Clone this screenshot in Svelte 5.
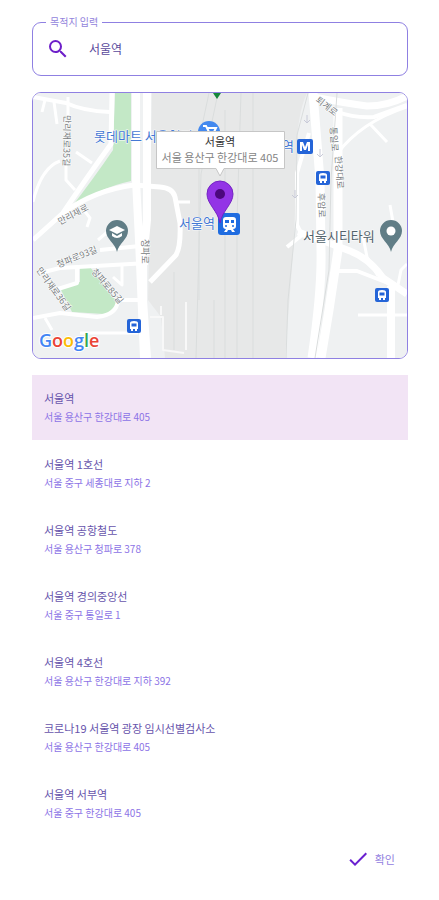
<script>
  let query = $state('서울역');
  let selected = $state(0);
  const places = [
    { name: '서울역', address: '서울 용산구 한강대로 405' },
    { name: '서울역 1호선', address: '서울 중구 세종대로 지하 2' },
    { name: '서울역 공항철도', address: '서울 용산구 청파로 378' },
    { name: '서울역 경의중앙선', address: '서울 중구 통일로 1' },
    { name: '서울역 4호선', address: '서울 용산구 한강대로 지하 392' },
    { name: '코로나19 서울역 광장 임시선별검사소', address: '서울 용산구 한강대로 405' },
    { name: '서울역 서부역', address: '서울 중구 한강대로 405' }
  ];
</script>

{#snippet bus(x, y)}
  <g transform="translate({x} {y})">
    <rect x="-7" y="-7" width="14" height="14" rx="2" fill="#2565d8" />
    <path d="M-4-3Q-4-5 0-5T4-3V3H3V5H1V3H-1V5H-3V3H-4Z" fill="#fff" />
    <path d="M-2.500-2.500H2.500V.5H-2.500Z" fill="#2565d8" />
  </g>
{/snippet}

<main>
  <fieldset class="search">
    <legend><label for="destination">목적지 입력</label></legend>
    <svg class="icon" viewBox="0 0 24 24" aria-hidden="true">
      <path fill="#6d1fc9" d="M15.500 14h-.79l-.28-.27A6.470 6.470 0 0 0 16 9.500 6.500 6.500 0 1 0 9.500 16c1.610 0 3.090-.59 4.230-1.570l.27.28v.79l5 4.990L20.490 19l-4.990-5zm-6 0C7.010 14 5 11.990 5 9.500S7.010 5 9.500 5 14 7.010 14 9.500 11.990 14 9.500 14z" />
    </svg>
    <input id="destination" type="text" bind:value={query} />
  </fieldset>

  <section class="map" aria-label="지도">
    <svg viewBox="33 93 374 265">
      <rect x="33" y="93" width="374" height="265" fill="#eff1f2" />
      <path d="M152 93H307Q297 115 297 150L294 240L285 358H165L161 317L148 300Z" fill="#e7e8e8" />
      <path d="M115 93H131V181Q98 188 70 209Q94 178 113 150Z" fill="#c3e8c6" />
      <path d="M80 267H90L118 303Q113 313 104 314L72 312L60 288L80 282Z" fill="#c3e8c6" />

      <g fill="none" stroke="#fff" stroke-linejoin="round">
        <path stroke-width="5" d="M112 93L111 144Q85 180 63 213L33 240M63 213Q95 190 134 185L160 187Q173 188 175 197L180 223Q181 246 176 255L150 282" />
        <path stroke-width="4" d="M33 318L60 313L97 317Q117 315 118 300H140M40 273L60 268L148 263M100 250L140 246M77 268V283L58 289M33 97L66 103Q83 111 110 112" />
        <path stroke-width="3" d="M68 97V117M54 102L57 124M45 100L42 112M33 202Q41 168 60 161M66 157V180L75 190M76 152L92 163M45 318L52 330M83 209L90 218L87 227M122 263V285L113 277M98 240L112 228M80 333H138M178 202H190" />
        <path stroke-width="2" d="M150 317H163V350L184 353M186 302V350M161 315V306" stroke="#f8f8f8" />
        <path stroke-width="8" d="M136 93V180L139 240L144 358M147 93V220L143 260V300L147 358" />
        <path stroke-width="9" d="M313 93L320 180L321 250Q322 290 312 358M338 108V250L329 310L321 358" />
        <path stroke-width="7" d="M314 97Q344 103 367 106Q388 106 407 96M298 232Q327 242 350 251Q369 258 383 278L407 294" />
        <path stroke-width="4" d="M338 112Q353 118 374 117L407 105M338 271L357 271L388 283M287 247L302 235L297 225V173L309 133" />
        <path stroke-width="8" d="M391 286V358" />
        <path stroke-width="3" d="M337 154Q361 122 407 107M370 124L387 142M358 315H407M363 237L367 257L378 276M398 285L401 270L407 264M390 205L393 222" />
      </g>

      <path d="M218 93L201 174L196 358M241 93L237 220V358M253 93V358M209 93L199 140V300M225 110V358M214 300V358M174 272V350M308 93L297 135L296 220L288 300L286 358M337 93L331 180L329 270L315 358" fill="none" stroke="#dadddd" />
      <path d="M307 115V123M304 120L307 123L310 120M320 149V157M317 154L320 157L323 154M295 190V198M292 195L295 198L298 195" fill="none" stroke="#c8cad8" />
      <path d="M213 93H221L217 99Z" fill="#16873b" />

      <g class="road">
        <text transform="translate(64 115) rotate(91)">만리재로35길</text>
        <text transform="translate(60 225) rotate(-28)">만리재로</text>
        <text transform="translate(58 268) rotate(-22)">청파로93길</text>
        <text transform="translate(36 270) rotate(54)">만리재로36길</text>
        <text transform="translate(91 272) rotate(49)">청파로85길</text>
        <text transform="translate(142 239) rotate(90)">청파로</text>
        <text transform="translate(315 101) rotate(38)">퇴계로</text>
        <text transform="translate(330 127) rotate(86)">통일로</text>
        <text transform="translate(335 156) rotate(86)">한강대로</text>
        <text transform="translate(318 193) rotate(88)">후암로</text>
      </g>

      <text class="place blue" x="94" y="141">롯데마트 서울역점</text>
      <text class="place blue" x="282" y="151">역</text>
      <text class="place blue" x="179" y="228">서울역</text>
      <text class="place dark" x="303" y="241">서울시티타워</text>

      <circle cx="209" cy="132" r="11" fill="#4389ef" />
      <path d="M203 126H206L209 132H216M207 128H216L214 132" fill="none" stroke="#fff" stroke-width="2" />

      <rect x="297" y="139" width="16" height="15" rx="2" fill="#2565d8" />
      <path d="M300 151V142H303L305 147L307 142H310V151H308V145L306 150H304L302 145V151Z" fill="#fff" />
      {@render bus(323, 178)}
      {@render bus(134, 326)}
      {@render bus(382, 295)}
      <rect x="218" y="213" width="22" height="22" rx="3" fill="#1f6ce0" />
      <path d="M223 220Q223 217 226 217H233Q236 217 236 220V226Q236 229 233 229L235 232H232L231 230H228L227 232H224L226 229Q223 229 223 226Z" fill="#fff" />
      <path d="M225 220H229V223H225ZM231 220H234V223H231Z" fill="#1f6ce0" />
      <circle cx="226" cy="226" r="1" fill="#1f6ce0" />
      <circle cx="233" cy="226" r="1" fill="#1f6ce0" />

      <path d="M117 252C115 243 106 239 106 231A11 11 0 0 1 128 231C128 239 119 243 117 252Z" fill="#607d86" />
      <path d="M109 230L117 226L125 230L117 234ZM112 233V236Q117 240 122 236V233L117 236Z" fill="#fff" />
      <path d="M391 252C389 243 380 239 380 231A11 11 0 0 1 402 231C402 239 393 243 391 252Z" fill="#607d86" />
      <circle cx="391" cy="231" r="4.500" fill="#fff" />

      <path d="M220 223C218 211 207 204 207 194A13 13 0 0 1 233 194C233 204 222 211 220 223Z" fill="#9334e6" stroke="#7423c4" />
      <circle cx="220" cy="194" r="5" fill="#4b087d" />

      <path d="M156.500 131.500H284.500V168.500H224L220 176L216 168.500H156.500Z" fill="#fff" stroke="#c6c6c6" />
      <text class="tip" x="220" y="146">서울역</text>
      <text class="tip address" x="220" y="162">서울 용산구 한강대로 405</text>

      <text class="google" x="39" y="347"><tspan fill="#4285f4">G</tspan><tspan fill="#ea4335">o</tspan><tspan fill="#fbbc05">o</tspan><tspan fill="#4285f4">g</tspan><tspan fill="#34a853">l</tspan><tspan fill="#ea4335">e</tspan></text>
    </svg>
  </section>

  <ul>
    {#each places as place, i}
      <li>
        <button class="result" class:selected={selected === i} onclick={() => (selected = i)}>
          <span class="name">{place.name}</span>
          <span class="address">{place.address}</span>
        </button>
      </li>
    {/each}
  </ul>

  <footer>
    <button class="confirm">
      <svg class="icon" viewBox="0 0 24 24" aria-hidden="true">
        <path fill="#6a20d0" d="M9 16.170L4.830 12l-1.420 1.410L9 19 21 7l-1.410-1.410z" />
      </svg>
      확인
    </button>
  </footer>
</main>

<style>
  :global(body) {
    margin: 0;
    background: #fff;
  }
  main {
    padding: 16px 31px 24px 32px;
    font-family: 'Noto Sans CJK KR', 'Noto Sans', sans-serif;
  }
  button,
  input {
    font: inherit;
    border: 0;
    background: none;
  }
  .search {
    display: flex;
    align-items: center;
    min-width: 0;
    height: 60px;
    margin: 0 0 16px;
    padding: 0 13px 6px;
    box-sizing: border-box;
    border: 1px solid #8f80e2;
    border-radius: 9px;
  }
  legend {
    padding: 0 4px;
    font-size: 10px;
    line-height: 12px;
    color: #9384dc;
  }
  .icon {
    flex: none;
    width: 24px;
    height: 24px;
  }
  input {
    flex: 1;
    min-width: 0;
    margin-left: 19px;
    padding: 0;
    font-size: 12px;
    line-height: 20px;
    color: #5b4a9c;
    outline: none;
  }
  .map {
    overflow: hidden;
    border: 1px solid #8f80e2;
    border-radius: 9px;
  }
  .map svg {
    display: block;
    width: 100%;
  }
  .road {
    font-size: 9px;
    fill: #777c80;
    stroke: #fff;
    stroke-width: 1px;
    paint-order: stroke;
  }
  .place {
    font-size: 13px;
    stroke: #fff;
    stroke-width: 1px;
    paint-order: stroke;
  }
  .blue {
    fill: #4478d4;
  }
  .dark {
    fill: #53636c;
  }
  .tip {
    font-size: 11px;
    text-anchor: middle;
    fill: #333;
  }
  .tip.address {
    fill: #858585;
  }
  .google {
    font-family: 'Open Sans', sans-serif;
    font-size: 18px;
    font-weight: 600;
    stroke: #fff;
    stroke-width: 2px;
    paint-order: stroke;
  }
  ul {
    margin: 16px 0 0;
    padding: 0;
    list-style: none;
  }
  li {
    padding-bottom: 1px;
  }
  .result {
    display: flex;
    flex-direction: column;
    gap: 3px;
    width: 100%;
    padding: 15px 12px;
    text-align: left;
    cursor: pointer;
  }
  .selected {
    background: #f2e4f5;
  }
  .name {
    font-size: 11px;
    line-height: 16px;
    color: #6754ac;
  }
  .result .address {
    font-size: 10px;
    line-height: 16px;
    color: #8c73e6;
  }
  footer {
    display: flex;
    justify-content: flex-end;
    padding: 10px 13px 0 0;
  }
  .confirm {
    display: flex;
    align-items: center;
    gap: 5px;
    padding: 0;
    font-size: 11px;
    line-height: 16px;
    color: #9280e0;
    cursor: pointer;
  }
</style>
